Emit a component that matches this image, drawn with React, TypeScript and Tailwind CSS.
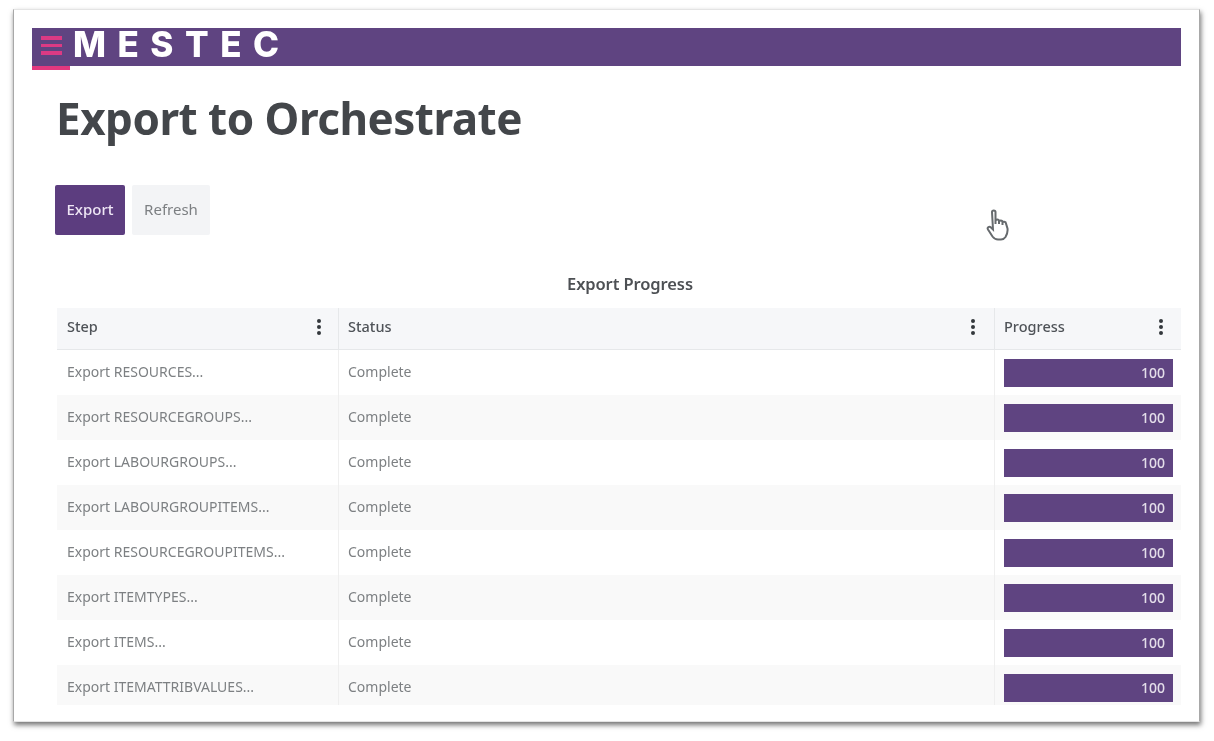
const steps = [
	"Export RESOURCES...",
	"Export RESOURCEGROUPS...",
	"Export LABOURGROUPS...",
	"Export LABOURGROUPITEMS...",
	"Export RESOURCEGROUPITEMS...",
	"Export ITEMTYPES...",
	"Export ITEMS...",
	"Export ITEMATTRIBVALUES...",
];

function Kebab() {
	return (
		<svg width="6" height="18" viewBox="0 0 6 18" className="shrink-0 fill-[#33383d]">
			<circle cx="3" cy="3" r="2" />
			<circle cx="3" cy="9" r="2" />
			<circle cx="3" cy="15" r="2" />
		</svg>
	);
}

function HeaderCell({ label, className }: { label: string; className: string }) {
	return (
		<div className={`flex items-center justify-between pb-[3px] ${className}`}>
			<span>{label}</span>
			<Kebab />
		</div>
	);
}

export default function App() {
	return (
		<div className="relative h-[741px] w-[1214px] overflow-hidden bg-white pl-[13px] pt-[9px] font-['Noto_Sans',sans-serif] blur-[0.6px]">
			<div className="h-[713px] w-[1187px] overflow-hidden border border-[#e4e4e4] border-l-[#a8a8a8] border-r-[#a8a8a8] bg-white pl-[18px] pr-[18px] pt-[18px] shadow-[1px_3px_5px_rgba(0,0,0,0.55)]">
				{/* Barra */}
				<div className="relative flex h-[38px] w-[1149px] items-start bg-[#5f4481]">
					<div className="ml-[9px] mt-[8px] flex w-[21px] flex-col gap-[4px]">
						<div className="h-[3.5px] bg-[#dc3a84]" />
						<div className="h-[3.5px] bg-[#dc3a84]" />
						<div className="h-[3.5px] bg-[#dc3a84]" />
					</div>
					<span className="ml-[11px] mt-[1px] font-['Inter',sans-serif] text-[35px] font-extrabold leading-[30px] tracking-[11.5px] text-white">
						MESTEC
					</span>
					<div className="absolute -bottom-[4px] left-0 h-[4px] w-[38px] bg-[#e2387f]" />
				</div>

				<h1 className="ml-[24px] mt-[22px] text-[44px] font-bold leading-[60px] tracking-[-0.5px] text-[#43464a]">
					Export to Orchestrate
				</h1>

				<div className="ml-[23px] mt-[37px] flex gap-[7px] text-[15px]">
					<button className="h-[50px] w-[70px] rounded-[2px] bg-[#5c3d7f] pb-[2px] font-medium text-[#eee6f5]">Export</button>
					<button className="h-[50px] w-[78px] rounded-[2px] bg-[#f3f4f6] pb-[2px] text-[#7c7f82]">Refresh</button>
				</div>

				<div className="ml-[25px] mt-[37px] w-[1124px]">
					<div className="pl-[22px] text-center text-[16.5px] font-semibold leading-[24px] tracking-[-0.1px] text-[#4d5054]">
						Export Progress
					</div>
					<div className="mt-[12px] h-[397px] overflow-hidden">
						<div className="flex h-[42px] border-b border-[#e6e8ea] bg-[#f6f7f9] text-[14.5px] font-medium text-[#4f5358]">
							<HeaderCell label="Step" className="w-[282px] border-r border-[#e6e8ea] pl-[10px] pr-[16px]" />
							<HeaderCell label="Status" className="w-[656px] border-r border-[#e6e8ea] pl-[9px] pr-[18px]" />
							<HeaderCell label="Progress" className="w-[186px] pl-[9px] pr-[17px]" />
						</div>
						{steps.map((step, i) => (
							<div
								key={step}
								className={`flex h-[45px] text-[14px] text-[#7d8083] ${i % 2 === 1 ? "bg-[#f9f9f9]" : "bg-white"}`}
							>
								<div className="flex w-[282px] items-center border-r border-[#efefef] pb-[3px] pl-[10px]">{step}</div>
								<div className="flex w-[656px] items-center border-r border-[#efefef] pb-[3px] pl-[9px]">Complete</div>
								<div className="flex w-[186px] items-center pl-[9px]">
									<div className="flex h-[28px] w-[169px] items-center justify-end bg-[#5f4481] pr-[8px] text-[14px] font-medium text-[#e4deea]">
										100
									</div>
								</div>
							</div>
						))}
					</div>
				</div>
			</div>

			{/* Cursor */}
			<svg
				width="24"
				height="32"
				viewBox="0 0 24 32"
				className="absolute left-[986px] top-[209px] fill-white stroke-[#666a6d] stroke-2"
			>
				<path d="M6 3c0-2 3.500-2 3.500 0v9c0-2 3.500-2 3.500 0v1c0-2 3.500-2 3.500 0v1c0-2 3.500-1.500 3.500 .5l1.500 5c.5 3.500-.5 6-2 8.500-1 1.500-2.500 2.500-4.500 2.500h-3c-2.500 0-4-1-5.500-3l-4.500-7c-1.200-2 1.300-3.500 3-2l2 2z" />
				<path d="M9.500 12v3M13 13v2M16.500 14v2" />
			</svg>
		</div>
	);
}
